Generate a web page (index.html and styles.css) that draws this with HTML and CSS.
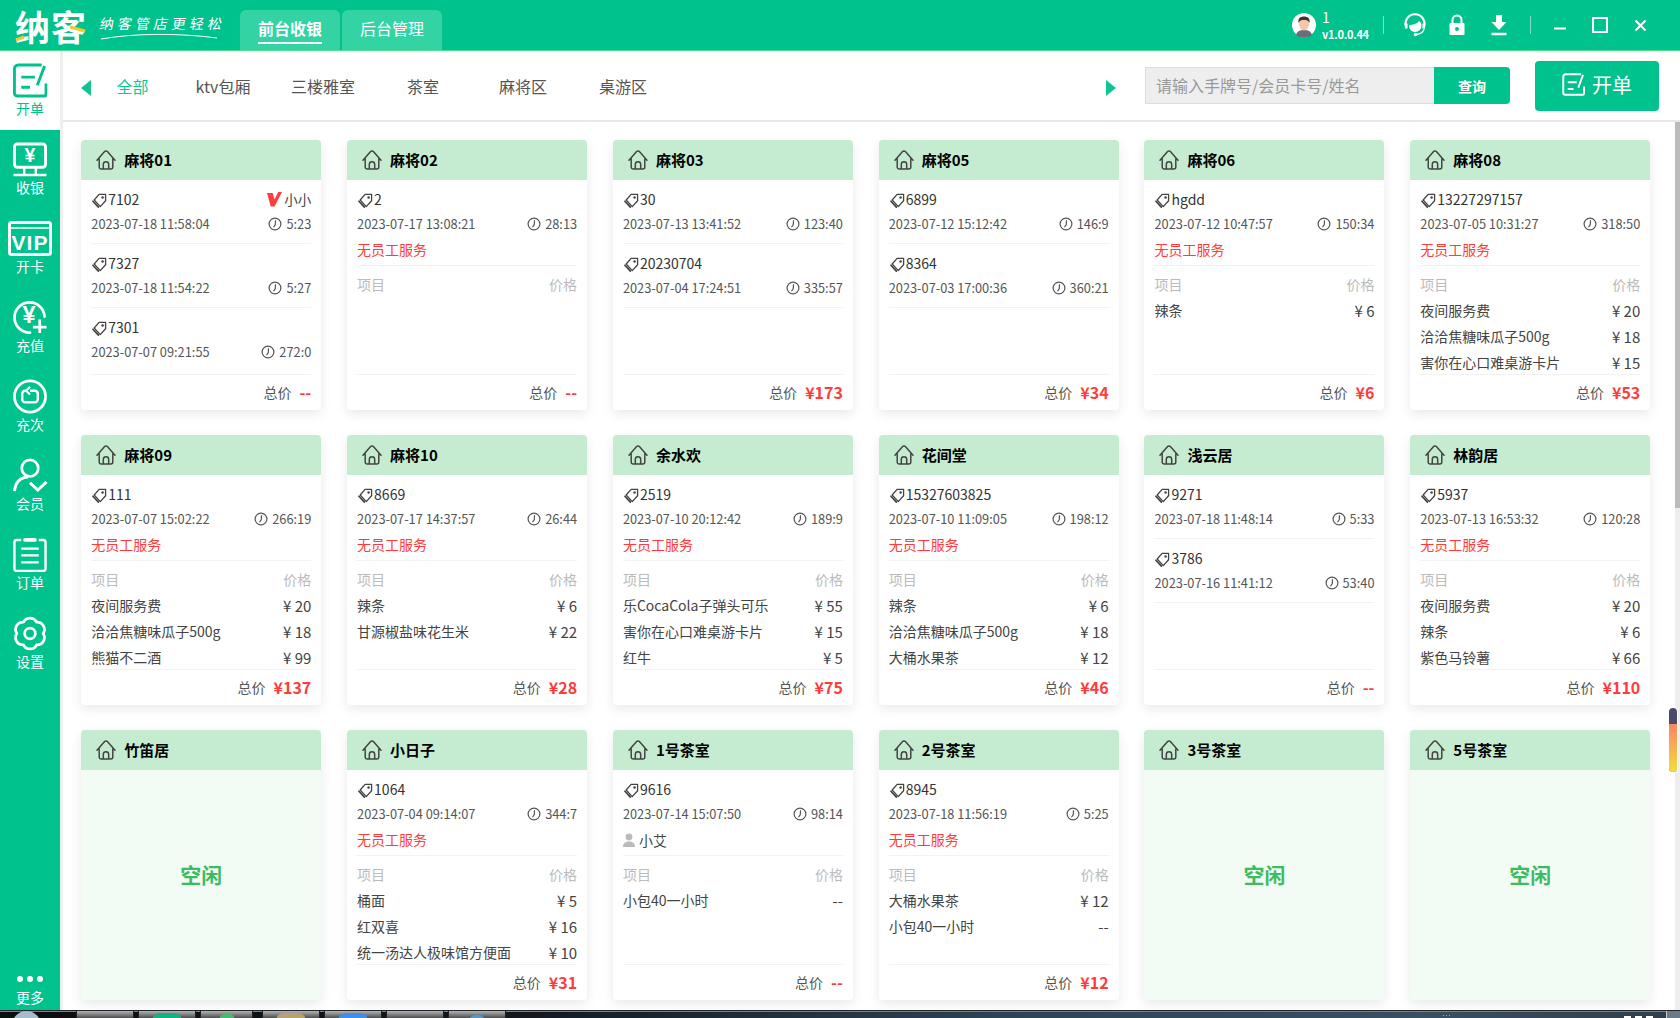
FILE: index.html
```html
<!DOCTYPE html>
<html lang="zh-CN">
<head>
<meta charset="utf-8">
<title>纳客</title>
<link rel="stylesheet" href="styles.css">
</head>
<body>
<svg class="defs" width="0" height="0">
  <symbol id="i-house" viewBox="0 0 20 20"><path d="M1 10.2 8.6 1.6a1.9 1.9 0 0 1 2.8 0L19 10.2M3.2 8.6V17a2 2 0 0 0 2 2h9.600a2 2 0 0 0 2-2V8.600M7.300 19v-4.500a2.700 2.700 0 0 1 5.400 0V19" fill="none" stroke="#444" stroke-width="1.500" stroke-linecap="round" stroke-linejoin="round"/></symbol>
  <symbol id="i-tag" viewBox="0 0 16 16"><path d="M7.600 1.500H14.500V8.300L8.800 14.500 2.300 7.500Z" fill="none" stroke="#444" stroke-width="1.400" stroke-linejoin="round"/><path d="M1 8.800 6.800 15" fill="none" stroke="#444" stroke-width="1.800" stroke-linecap="round"/><circle cx="11.300" cy="4.800" r="1.300" fill="#444"/></symbol>
  <symbol id="i-clock" viewBox="0 0 14 14"><circle cx="7" cy="7" r="5.900" fill="none" stroke="#555" stroke-width="1.200"/><path d="M7.500 3.300 7.300 7.500 5.500 10.300" fill="none" stroke="#555" stroke-width="1.200"/></symbol>
  <symbol id="i-person" viewBox="0 0 12 14"><circle cx="6" cy="4" r="3.400" fill="#bbb"/><path d="M0 14c0-4 2.500-5.500 6-5.500S12 10 12 14Z" fill="#bbb"/></symbol>
  <symbol id="i-bill" viewBox="0 0 36 36"><path d="M30 2H6a4 4 0 0 0-4 4v25a3 3 0 0 0 3 3h27a2.500 2.500 0 0 0 2.500-2.500V21M9 14.500h14M9 25h9M33 3 25.500 23" fill="none" stroke="currentColor" stroke-width="3"/></symbol>
</svg>
<div class="window">
  <header class="topbar">
    <div class="logo">
      <span class="logo-mark">纳客</span>
      <svg class="logo-swash" width="72" height="30" viewBox="0 0 72 30"><path d="M1 27 9 24M55 14 70 18" fill="none" stroke="#f5c630" stroke-width="3"/></svg>
      <div class="logo-tag">
        <span class="logo-slogan">纳客管店更轻松</span>
        <svg class="logo-curve" width="118" height="8" viewBox="0 0 118 8"><path d="M1 7C35 1 80 1 117 6" fill="none" stroke="#fff" stroke-width="1"/></svg>
      </div>
    </div>
    <nav class="modes">
      <a class="mode mode-on"><span>前台收银</span></a>
      <a class="mode"><span>后台管理</span></a>
    </nav>
    <div class="tools">
      <svg class="avatar" width="24" height="24" viewBox="0 0 24 24"><circle cx="12" cy="12" r="12" fill="#fff"/><path d="M4 22c1-4 4-5 8-5s7 1 8 5a12 12 0 0 1-16 0Z" fill="#6b6f78"/><ellipse cx="12" cy="11" rx="5" ry="6.500" fill="#f5c7a5"/><path d="M6.500 10C5.500 4 10 3.500 12 3.500s6.500.5 5.500 6.500c-1-2.500-3-3-5.500-3s-4.500.5-5.500 3Z" fill="#3a3633"/></svg>
      <div class="user"><div class="user-id">1</div><div class="user-ver">v1.0.0.44</div></div>
      <i class="vline"></i>
      <a class="tool"><svg width="22" height="24" viewBox="0 0 22 24"><path d="M2.500 15A9.500 9.500 0 1 1 19.500 15" fill="none" stroke="#fff" stroke-width="2.200"/><path d="M1 10.500v5h2.500v-5ZM18.500 10.500v5H21v-5Z" fill="#fff"/><path d="M5 12c3.500 0 8-1 10-4 2 1 2.500 3 2.500 5 0 3-3 6-6.500 6S5 16 5 12Z" fill="#fff"/><path d="M20 16c-.5 3-3.500 5-8 5.500" fill="none" stroke="#fff" stroke-width="1.500"/><circle cx="11.500" cy="21.500" r="1.700" fill="#fff"/></svg></a>
      <a class="tool"><svg width="16" height="22" viewBox="0 0 16 22"><path d="M3.500 9V6a4.500 4.500 0 0 1 9 0v3" fill="none" stroke="#fff" stroke-width="2"/><path d="M1.500 9h13a1 1 0 0 1 1 1v10a1 1 0 0 1-1 1h-13a1 1 0 0 1-1-1V10a1 1 0 0 1 1-1Z" fill="#fff"/><circle cx="8" cy="15" r="2" fill="#00c28c"/></svg></a>
      <a class="tool"><svg width="16" height="21" viewBox="0 0 16 21"><path d="M5 0h6v7h4.500L8 15 .5 7H5Z" fill="#fff"/><path d="M.5 19h15" stroke="#fff" stroke-width="2.500"/></svg></a>
      <i class="vline vline-r"></i>
      <a class="win"><svg width="13" height="13" viewBox="0 0 13 13"><path d="M0 9.500h12" stroke="#fff" stroke-width="2"/></svg></a>
      <a class="win"><svg width="16" height="16" viewBox="0 0 16 16"><rect x="1" y="1" width="14" height="14" fill="none" stroke="#fff" stroke-width="2"/></svg></a>
      <a class="win"><svg width="13" height="13" viewBox="0 0 13 13"><path d="M1.500 1.500 11.500 11.500M11.500 1.500 1.500 11.500" stroke="#fff" stroke-width="2"/></svg></a>
    </div>
  </header>
  <div class="main">
    <aside class="side">
      <a class="nav nav-on"><svg class="nav-i" width="36" height="35" viewBox="0 0 36 36"><use href="#i-bill"/></svg><span>开单</span></a>
      <a class="nav"><svg class="nav-i" width="36" height="35" viewBox="0 0 36 36"><rect x="2" y="2" width="32" height="24" rx="3" fill="none" stroke="#fff" stroke-width="3"/><text class="nav-yen" x="18" y="21" text-anchor="middle">¥</text><path d="M12 26v7M24 26v7M1 34h34" stroke="#fff" stroke-width="2.500" fill="none"/></svg><span>收银</span></a>
      <a class="nav"><svg class="nav-i" width="44" height="35" viewBox="0 0 44 35"><rect x="1.500" y="1.500" width="41" height="32" rx="2" fill="none" stroke="#fff" stroke-width="3"/><path d="M1.500 7h41" stroke="#fff" stroke-width="1.500"/><text class="nav-vip" x="22" y="29" text-anchor="middle">VIP</text></svg><span>开卡</span></a>
      <a class="nav"><svg class="nav-i" width="36" height="35" viewBox="0 0 36 36"><path d="M33 17A15.500 15.500 0 1 0 18 33.500" fill="none" stroke="#fff" stroke-width="2.800" stroke-linecap="round"/><text class="nav-yen nav-yen-l" x="17" y="24" text-anchor="middle">¥</text><path d="M28 20v14M21 28h14" stroke="#fff" stroke-width="2.800"/></svg><span>充值</span></a>
      <a class="nav"><svg class="nav-i" width="36" height="35" viewBox="0 0 36 36"><circle cx="18" cy="18" r="16" fill="none" stroke="#fff" stroke-width="2.800"/><path d="M14 12h-1a3 3 0 0 0-3 3v6a3 3 0 0 0 3 3h10a3 3 0 0 0 3-3v-6a3 3 0 0 0-3-3h-5" fill="none" stroke="#fff" stroke-width="2.500"/><path d="M18 8l-4 4 4 4" fill="none" stroke="#fff" stroke-width="2.200"/></svg><span>充次</span></a>
      <a class="nav"><svg class="nav-i" width="36" height="35" viewBox="0 0 36 36"><circle cx="18" cy="10.500" r="8.500" fill="none" stroke="#fff" stroke-width="2.800"/><path d="M2 34C3 25 8 20 16 19.500" fill="none" stroke="#fff" stroke-width="3"/><path d="M18 25.500 26 33 35 24.500" fill="none" stroke="#fff" stroke-width="3"/></svg><span>会员</span></a>
      <a class="nav"><svg class="nav-i" width="36" height="35" viewBox="0 0 36 36"><path d="M9 3H4.500A2.500 2.500 0 0 0 2 5.500v27A2.500 2.500 0 0 0 4.500 35h27a2.500 2.500 0 0 0 2.500-2.500v-27A2.500 2.500 0 0 0 31.500 3H27" fill="none" stroke="#fff" stroke-width="2.500"/><path d="M13 3h10" stroke="#fff" stroke-width="4" stroke-linecap="round"/><path d="M9 12h18M9 19h18M9 26h18" stroke="#fff" stroke-width="2.300"/></svg><span>订单</span></a>
      <a class="nav"><svg class="nav-i" width="36" height="35" viewBox="0 0 36 36"><path d="M11.250 6.310A7.500 7.500 0 0 1 24.750 6.310 7.500 7.500 0 0 1 31.500 18 7.500 7.500 0 0 1 24.750 29.690 7.500 7.500 0 0 1 11.250 29.690 7.500 7.500 0 0 1 4.500 18 7.500 7.500 0 0 1 11.250 6.310Z" fill="none" stroke="#fff" stroke-width="2.800" stroke-linejoin="round"/><circle cx="18" cy="18" r="5.500" fill="none" stroke="#fff" stroke-width="2.800"/></svg><span>设置</span></a>
      <a class="nav-more"><span class="dots"><i></i><i></i><i></i></span><span>更多</span></a>
    </aside>
    <section class="content">
      <div class="tabbar">
        <svg class="arrow" width="10" height="16" viewBox="0 0 10 16"><path d="M10 0 0 8l10 8Z" fill="#11c495"/></svg>
        <a class="tab tab-first tab-on">全部</a>
        <a class="tab">ktv包厢</a>
        <a class="tab">三楼雅室</a>
        <a class="tab">茶室</a>
        <a class="tab">麻将区</a>
        <a class="tab">桌游区</a>
        <svg class="arrow arrow-r" width="10" height="16" viewBox="0 0 10 16"><path d="M0 0l10 8-10 8Z" fill="#11c495"/></svg>
        <div class="search"><span class="search-input">请输入手牌号/会员卡号/姓名</span><button class="search-btn">查询</button></div>
        <button class="open-btn"><svg width="23" height="23" viewBox="0 0 36 36"><use href="#i-bill"/></svg><span class="open-text">开单</span></button>
      </div>
      <div class="pane">
        <div class="cards">

          <article class="card">
            <h3 class="head"><svg class="ic-house"><use href="#i-house"/></svg>麻将01</h3>
            <div class="body">
              <div class="sess">
                <div class="l-tag"><svg class="ic-tag"><use href="#i-tag"/></svg>7102<span class="vip"><svg width="15" height="15" viewBox="0 0 16 16"><path d="M0 1h6l2 7 4-8h4L8 15.500H4Z" fill="#ff3b3b"/></svg>小小</span></div>
                <div class="l-date"><span>2023-07-18 11:58:04</span><span class="dur"><svg class="ic-clock"><use href="#i-clock"/></svg>5:23</span></div>
              </div>
              <div class="sess">
                <div class="l-tag"><svg class="ic-tag"><use href="#i-tag"/></svg>7327</div>
                <div class="l-date"><span>2023-07-18 11:54:22</span><span class="dur"><svg class="ic-clock"><use href="#i-clock"/></svg>5:27</span></div>
              </div>
              <div class="sess sess-last">
                <div class="l-tag"><svg class="ic-tag"><use href="#i-tag"/></svg>7301</div>
                <div class="l-date"><span>2023-07-07 09:21:55</span><span class="dur"><svg class="ic-clock"><use href="#i-clock"/></svg>272:0</span></div>
              </div>
            </div>
            <div class="foot">总价<b>--</b></div>
          </article>

          <article class="card">
            <h3 class="head"><svg class="ic-house"><use href="#i-house"/></svg>麻将02</h3>
            <div class="body">
              <div class="sess sess-staff">
                <div class="l-tag"><svg class="ic-tag"><use href="#i-tag"/></svg>2</div>
                <div class="l-date"><span>2023-07-17 13:08:21</span><span class="dur"><svg class="ic-clock"><use href="#i-clock"/></svg>28:13</span></div>
                <div class="l-staff">无员工服务</div>
              </div>
              <div class="items"><div class="it it-h"><span>项目</span><span>价格</span></div></div>
            </div>
            <div class="foot">总价<b>--</b></div>
          </article>

          <article class="card">
            <h3 class="head"><svg class="ic-house"><use href="#i-house"/></svg>麻将03</h3>
            <div class="body">
              <div class="sess">
                <div class="l-tag"><svg class="ic-tag"><use href="#i-tag"/></svg>30</div>
                <div class="l-date"><span>2023-07-13 13:41:52</span><span class="dur"><svg class="ic-clock"><use href="#i-clock"/></svg>123:40</span></div>
              </div>
              <div class="sess">
                <div class="l-tag"><svg class="ic-tag"><use href="#i-tag"/></svg>20230704</div>
                <div class="l-date"><span>2023-07-04 17:24:51</span><span class="dur"><svg class="ic-clock"><use href="#i-clock"/></svg>335:57</span></div>
              </div>
            </div>
            <div class="foot">总价<b>¥173</b></div>
          </article>

          <article class="card">
            <h3 class="head"><svg class="ic-house"><use href="#i-house"/></svg>麻将05</h3>
            <div class="body">
              <div class="sess">
                <div class="l-tag"><svg class="ic-tag"><use href="#i-tag"/></svg>6899</div>
                <div class="l-date"><span>2023-07-12 15:12:42</span><span class="dur"><svg class="ic-clock"><use href="#i-clock"/></svg>146:9</span></div>
              </div>
              <div class="sess">
                <div class="l-tag"><svg class="ic-tag"><use href="#i-tag"/></svg>8364</div>
                <div class="l-date"><span>2023-07-03 17:00:36</span><span class="dur"><svg class="ic-clock"><use href="#i-clock"/></svg>360:21</span></div>
              </div>
            </div>
            <div class="foot">总价<b>¥34</b></div>
          </article>

          <article class="card">
            <h3 class="head"><svg class="ic-house"><use href="#i-house"/></svg>麻将06</h3>
            <div class="body">
              <div class="sess sess-staff">
                <div class="l-tag"><svg class="ic-tag"><use href="#i-tag"/></svg>hgdd</div>
                <div class="l-date"><span>2023-07-12 10:47:57</span><span class="dur"><svg class="ic-clock"><use href="#i-clock"/></svg>150:34</span></div>
                <div class="l-staff">无员工服务</div>
              </div>
              <div class="items">
                <div class="it it-h"><span>项目</span><span>价格</span></div>
                <div class="it"><span>辣条</span><span class="pr">¥ 6</span></div>
              </div>
            </div>
            <div class="foot">总价<b>¥6</b></div>
          </article>

          <article class="card">
            <h3 class="head"><svg class="ic-house"><use href="#i-house"/></svg>麻将08</h3>
            <div class="body">
              <div class="sess sess-staff">
                <div class="l-tag"><svg class="ic-tag"><use href="#i-tag"/></svg>13227297157</div>
                <div class="l-date"><span>2023-07-05 10:31:27</span><span class="dur"><svg class="ic-clock"><use href="#i-clock"/></svg>318:50</span></div>
                <div class="l-staff">无员工服务</div>
              </div>
              <div class="items">
                <div class="it it-h"><span>项目</span><span>价格</span></div>
                <div class="it"><span>夜间服务费</span><span class="pr">¥ 20</span></div>
                <div class="it"><span>洽洽焦糖味瓜子500g</span><span class="pr">¥ 18</span></div>
                <div class="it"><span>害你在心口难桌游卡片</span><span class="pr">¥ 15</span></div>
              </div>
            </div>
            <div class="foot">总价<b>¥53</b></div>
          </article>

          <article class="card">
            <h3 class="head"><svg class="ic-house"><use href="#i-house"/></svg>麻将09</h3>
            <div class="body">
              <div class="sess sess-staff">
                <div class="l-tag"><svg class="ic-tag"><use href="#i-tag"/></svg>111</div>
                <div class="l-date"><span>2023-07-07 15:02:22</span><span class="dur"><svg class="ic-clock"><use href="#i-clock"/></svg>266:19</span></div>
                <div class="l-staff">无员工服务</div>
              </div>
              <div class="items">
                <div class="it it-h"><span>项目</span><span>价格</span></div>
                <div class="it"><span>夜间服务费</span><span class="pr">¥ 20</span></div>
                <div class="it"><span>洽洽焦糖味瓜子500g</span><span class="pr">¥ 18</span></div>
                <div class="it"><span>熊猫不二酒</span><span class="pr">¥ 99</span></div>
              </div>
            </div>
            <div class="foot">总价<b>¥137</b></div>
          </article>

          <article class="card">
            <h3 class="head"><svg class="ic-house"><use href="#i-house"/></svg>麻将10</h3>
            <div class="body">
              <div class="sess sess-staff">
                <div class="l-tag"><svg class="ic-tag"><use href="#i-tag"/></svg>8669</div>
                <div class="l-date"><span>2023-07-17 14:37:57</span><span class="dur"><svg class="ic-clock"><use href="#i-clock"/></svg>26:44</span></div>
                <div class="l-staff">无员工服务</div>
              </div>
              <div class="items">
                <div class="it it-h"><span>项目</span><span>价格</span></div>
                <div class="it"><span>辣条</span><span class="pr">¥ 6</span></div>
                <div class="it"><span>甘源椒盐味花生米</span><span class="pr">¥ 22</span></div>
              </div>
            </div>
            <div class="foot">总价<b>¥28</b></div>
          </article>

          <article class="card">
            <h3 class="head"><svg class="ic-house"><use href="#i-house"/></svg>余水欢</h3>
            <div class="body">
              <div class="sess sess-staff">
                <div class="l-tag"><svg class="ic-tag"><use href="#i-tag"/></svg>2519</div>
                <div class="l-date"><span>2023-07-10 20:12:42</span><span class="dur"><svg class="ic-clock"><use href="#i-clock"/></svg>189:9</span></div>
                <div class="l-staff">无员工服务</div>
              </div>
              <div class="items">
                <div class="it it-h"><span>项目</span><span>价格</span></div>
                <div class="it"><span>乐CocaCola子弹头可乐</span><span class="pr">¥ 55</span></div>
                <div class="it"><span>害你在心口难桌游卡片</span><span class="pr">¥ 15</span></div>
                <div class="it"><span>红牛</span><span class="pr">¥ 5</span></div>
              </div>
            </div>
            <div class="foot">总价<b>¥75</b></div>
          </article>

          <article class="card">
            <h3 class="head"><svg class="ic-house"><use href="#i-house"/></svg>花间堂</h3>
            <div class="body">
              <div class="sess sess-staff">
                <div class="l-tag"><svg class="ic-tag"><use href="#i-tag"/></svg>15327603825</div>
                <div class="l-date"><span>2023-07-10 11:09:05</span><span class="dur"><svg class="ic-clock"><use href="#i-clock"/></svg>198:12</span></div>
                <div class="l-staff">无员工服务</div>
              </div>
              <div class="items">
                <div class="it it-h"><span>项目</span><span>价格</span></div>
                <div class="it"><span>辣条</span><span class="pr">¥ 6</span></div>
                <div class="it"><span>洽洽焦糖味瓜子500g</span><span class="pr">¥ 18</span></div>
                <div class="it"><span>大桶水果茶</span><span class="pr">¥ 12</span></div>
              </div>
            </div>
            <div class="foot">总价<b>¥46</b></div>
          </article>

          <article class="card">
            <h3 class="head"><svg class="ic-house"><use href="#i-house"/></svg>浅云居</h3>
            <div class="body">
              <div class="sess">
                <div class="l-tag"><svg class="ic-tag"><use href="#i-tag"/></svg>9271</div>
                <div class="l-date"><span>2023-07-18 11:48:14</span><span class="dur"><svg class="ic-clock"><use href="#i-clock"/></svg>5:33</span></div>
              </div>
              <div class="sess">
                <div class="l-tag"><svg class="ic-tag"><use href="#i-tag"/></svg>3786</div>
                <div class="l-date"><span>2023-07-16 11:41:12</span><span class="dur"><svg class="ic-clock"><use href="#i-clock"/></svg>53:40</span></div>
              </div>
            </div>
            <div class="foot">总价<b>--</b></div>
          </article>

          <article class="card">
            <h3 class="head"><svg class="ic-house"><use href="#i-house"/></svg>林韵居</h3>
            <div class="body">
              <div class="sess sess-staff">
                <div class="l-tag"><svg class="ic-tag"><use href="#i-tag"/></svg>5937</div>
                <div class="l-date"><span>2023-07-13 16:53:32</span><span class="dur"><svg class="ic-clock"><use href="#i-clock"/></svg>120:28</span></div>
                <div class="l-staff">无员工服务</div>
              </div>
              <div class="items">
                <div class="it it-h"><span>项目</span><span>价格</span></div>
                <div class="it"><span>夜间服务费</span><span class="pr">¥ 20</span></div>
                <div class="it"><span>辣条</span><span class="pr">¥ 6</span></div>
                <div class="it"><span>紫色马铃薯</span><span class="pr">¥ 66</span></div>
              </div>
            </div>
            <div class="foot">总价<b>¥110</b></div>
          </article>

          <article class="card card-free">
            <h3 class="head"><svg class="ic-house"><use href="#i-house"/></svg>竹笛居</h3>
            <div class="free">空闲</div>
          </article>

          <article class="card">
            <h3 class="head"><svg class="ic-house"><use href="#i-house"/></svg>小日子</h3>
            <div class="body">
              <div class="sess sess-staff">
                <div class="l-tag"><svg class="ic-tag"><use href="#i-tag"/></svg>1064</div>
                <div class="l-date"><span>2023-07-04 09:14:07</span><span class="dur"><svg class="ic-clock"><use href="#i-clock"/></svg>344:7</span></div>
                <div class="l-staff">无员工服务</div>
              </div>
              <div class="items">
                <div class="it it-h"><span>项目</span><span>价格</span></div>
                <div class="it"><span>桶面</span><span class="pr">¥ 5</span></div>
                <div class="it"><span>红双喜</span><span class="pr">¥ 16</span></div>
                <div class="it"><span>统一汤达人极味馆方便面</span><span class="pr">¥ 10</span></div>
              </div>
            </div>
            <div class="foot">总价<b>¥31</b></div>
          </article>

          <article class="card">
            <h3 class="head"><svg class="ic-house"><use href="#i-house"/></svg>1号茶室</h3>
            <div class="body">
              <div class="sess sess-staff">
                <div class="l-tag"><svg class="ic-tag"><use href="#i-tag"/></svg>9616</div>
                <div class="l-date"><span>2023-07-14 15:07:50</span><span class="dur"><svg class="ic-clock"><use href="#i-clock"/></svg>98:14</span></div>
                <div class="l-staff l-person"><svg class="ic-person"><use href="#i-person"/></svg>小艾</div>
              </div>
              <div class="items">
                <div class="it it-h"><span>项目</span><span>价格</span></div>
                <div class="it"><span>小包40一小时</span><span class="pr">--</span></div>
              </div>
            </div>
            <div class="foot">总价<b>--</b></div>
          </article>

          <article class="card">
            <h3 class="head"><svg class="ic-house"><use href="#i-house"/></svg>2号茶室</h3>
            <div class="body">
              <div class="sess sess-staff">
                <div class="l-tag"><svg class="ic-tag"><use href="#i-tag"/></svg>8945</div>
                <div class="l-date"><span>2023-07-18 11:56:19</span><span class="dur"><svg class="ic-clock"><use href="#i-clock"/></svg>5:25</span></div>
                <div class="l-staff">无员工服务</div>
              </div>
              <div class="items">
                <div class="it it-h"><span>项目</span><span>价格</span></div>
                <div class="it"><span>大桶水果茶</span><span class="pr">¥ 12</span></div>
                <div class="it"><span>小包40一小时</span><span class="pr">--</span></div>
              </div>
            </div>
            <div class="foot">总价<b>¥12</b></div>
          </article>

          <article class="card card-free">
            <h3 class="head"><svg class="ic-house"><use href="#i-house"/></svg>3号茶室</h3>
            <div class="free">空闲</div>
          </article>

          <article class="card card-free">
            <h3 class="head"><svg class="ic-house"><use href="#i-house"/></svg>5号茶室</h3>
            <div class="free">空闲</div>
          </article>

        </div>
        <div class="scroll"><div class="scroll-thumb"></div></div>
        <div class="indicator"><i></i></div>
      </div>
    </section>
  </div>
</div>
<footer class="taskbar">
  <span class="orb"></span>
  <span class="tb"></span>
  <span class="tb"><i class="tb-i tb-green"></i></span>
  <span class="tb tb-n"><i class="tb-i tb-lime"></i></span>
  <span class="tb"><i class="tb-i tb-tan"></i></span>
  <span class="tb"><i class="tb-i tb-blue"></i></span>
  <span class="tb"></span>
  <span class="tb"><i class="tb-i tb-sky"></i></span>
  <span class="tb-dots"><i></i><i></i><i></i></span>
  <span class="tb-clock"><i></i><i></i><i></i></span>
  <span class="tb-desk"></span>
</footer>
</body>
</html>
```
FILE: styles.css
```css
* { box-sizing: border-box; }
html, body { margin: 0; height: 100%; }
body {
  width: 1680px;
  height: 1018px;
  overflow: hidden;
  display: flex;
  flex-direction: column;
  font-family: "Noto Sans CJK SC", "Noto Sans", sans-serif;
  color: #444;
  background: #fff;
}
a { text-decoration: none; color: inherit; }
.defs { position: absolute; }
.window { height: 1010px; display: flex; flex-direction: column; }

/* top bar */
.topbar {
  height: 51px;
  flex: none;
  display: flex;
  background: #00c28c;
  border-bottom: 1px solid #4ede8f;
  color: #fff;
}
.logo { position: relative; width: 240px; display: flex; align-items: center; padding-left: 15px; flex: none; }
.logo-mark { width: 85px; font-size: 35px; line-height: 40px; font-weight: 700; letter-spacing: 1px; margin-top: 2px; white-space: nowrap; }
.logo-swash { position: absolute; left: 15px; top: 13px; }
.logo-tag { display: flex; flex-direction: column; }
.logo-slogan { font-size: 14px; line-height: 20px; letter-spacing: 4px; transform: skewX(-10deg); white-space: nowrap; margin-top: 2px; }
.logo-curve { margin-top: -1px; }
.modes { display: flex; gap: 2px; align-self: flex-end; }
.mode {
  width: 100px;
  height: 40px;
  background: #33d3a3;
  border-radius: 6px 6px 0 0;
  display: flex;
  justify-content: center;
  align-items: center;
  font-size: 16px;
}
.mode span { display: block; line-height: 24px; border-bottom: 2px solid transparent; height: 28px; }
.mode-on span { font-weight: 700; border-bottom-color: #fff; }
.tools { margin-left: auto; display: flex; align-items: center; padding-right: 20px; }
.avatar { flex: none; margin-right: 6px; }
.user { width: 41px; margin-right: 20px; }
.user-id { font-size: 14px; line-height: 18px; }
.user-ver { font-size: 11px; line-height: 16px; font-weight: 700; letter-spacing: -.3px; white-space: nowrap; }
.vline { width: 1px; height: 18px; background: rgba(255, 255, 255, .5); margin-right: 10px; }
.vline-r { margin-right: 9px; margin-left: 10px; }
.tool { width: 42px; display: flex; justify-content: center; align-items: center; height: 50px; }
.win { width: 40px; display: flex; justify-content: center; align-items: center; height: 50px; }

/* body layout */
.main { flex: 1; display: flex; min-height: 0; }
.side {
  width: 63px;
  flex: none;
  background: #00c28c;
  border-right: 3px solid #eee;
  display: flex;
  flex-direction: column;
  color: #fff;
}
.nav {
  height: 79px;
  flex: none;
  padding-top: 12px;
  display: flex;
  flex-direction: column;
  align-items: center;
  font-size: 14px;
}
.nav span { line-height: 19px; margin-top: 1px; }
.nav-i { flex: none; }
.nav-on { background: #fff; color: #00c28c; }
.nav-yen { font-size: 20px; font-weight: 700; fill: #fff; font-family: "Liberation Sans", sans-serif; }
.nav-yen-l { font-size: 24px; }
.nav-vip { font-size: 21px; font-weight: 700; fill: #fff; font-family: "Liberation Sans", sans-serif; letter-spacing: 1px; }
.nav-more { margin-top: auto; display: flex; flex-direction: column; align-items: center; font-size: 14px; line-height: 20px; padding-bottom: 3px; }
.dots { display: flex; gap: 4px; margin-bottom: 5px; }
.dots i { width: 6px; height: 6px; background: #fff; border-radius: 50%; }

.content { flex: 1; min-width: 0; display: flex; flex-direction: column; }
.tabbar {
  height: 71px;
  flex: none;
  border-bottom: 2px solid #e8e8e8;
  padding: 0 21px 0 18px;
  display: flex;
  align-items: center;
}
.arrow { flex: none; margin-top: 4px; margin-right: 1px; }
.arrow-r { margin-left: auto; margin-right: 0; }
.tab {
  width: 100px;
  flex: none;
  text-align: center;
  font-size: 16px;
  line-height: 24px;
  color: #555;
  margin-top: 1px;
}
.tab-first { width: 81px; }
.tab-on { color: #11c495; }
.search { display: flex; height: 37px; margin-left: 29px; }
.search-input {
  width: 289px;
  background: #eee;
  border: 1px solid #ddd;
  border-right: 0;
  padding-left: 10px;
  font-size: 16px;
  line-height: 35px;
  color: #999;
}
.search-btn {
  width: 76px;
  border: 0;
  padding: 0;
  border-radius: 0 4px 4px 0;
  background: #00c28c;
  color: #fff;
  font: 700 14px "Noto Sans CJK SC", sans-serif;
}
.open-btn {
  width: 124px;
  height: 50px;
  margin-left: 25px;
  border: 0;
  padding: 0 0 2px;
  border-radius: 4px;
  background: #00c28c;
  color: #fff;
  display: flex;
  justify-content: center;
  align-items: center;
  gap: 7px;
  font: 20px "Noto Sans CJK SC", sans-serif;
}

/* card area */
.pane { flex: 1; min-height: 0; position: relative; display: flex; }
.cards {
  flex: 1;
  padding: 18px 0 0 18.3px;
  display: grid;
  grid-template-columns: repeat(6, 240px);
  grid-auto-rows: 270px;
  column-gap: 25.8px;
  row-gap: 25px;
  align-content: start;
}
.card {
  display: flex;
  flex-direction: column;
  background: #fff;
  border-radius: 4px;
  box-shadow: 0 4px 12px rgba(0, 0, 0, .09);
  overflow: hidden;
  min-height: 0;
}
.head {
  margin: 0;
  height: 40px;
  flex: none;
  background: #c5ecd0;
  display: flex;
  align-items: center;
  padding: 0 0 2px 15px;
  font-size: 15px;
  font-weight: 700;
  color: #000;
}
.ic-house { width: 20px; height: 20px; margin: 2px 8px 0 0; flex: none; }
.body { height: 194px; flex: none; padding: 0 10px; overflow: hidden; }
.sess { padding-top: 8px; padding-bottom: 8px; border-bottom: 1px solid #f2f2f2; }
.sess-last { border-bottom: 0; }
.sess-staff { padding-bottom: 0; }
.l-tag { height: 24px; display: flex; align-items: center; font-size: 14px; line-height: 22px; color: #333; padding-bottom: 2px; }
.ic-tag { width: 15px; height: 15px; margin: 2px 1px 0 1px; flex: none; }
.vip { margin-left: auto; display: flex; align-items: center; gap: 2px; font-size: 13.500px; color: #444; }
.l-date { height: 23px; display: flex; justify-content: space-between; align-items: center; font-size: 12.800px; color: #555; white-space: nowrap; padding-bottom: 1px; }
.dur { display: flex; align-items: center; gap: 4px; }
.ic-clock { width: 14px; height: 14px; flex: none; margin-top: 1px; }
.l-staff { height: 30px; font-size: 14px; line-height: 28px; color: #ff3b3b; }
.l-person { color: #444; display: flex; align-items: center; gap: 4px; }
.ic-person { width: 12px; height: 14px; flex: none; }
.items { padding-top: 8px; display: flex; flex-direction: column; gap: 4px; }
.it { height: 22px; display: flex; justify-content: space-between; align-items: center; font-size: 14px; color: #444; white-space: nowrap; padding-bottom: 2px; }
.it-h { color: #bbb; }
.pr { font-size: 15px; }
.foot {
  height: 36px;
  flex: none;
  margin: 0 10px;
  border-top: 1px solid #f2f2f2;
  display: flex;
  justify-content: flex-end;
  align-items: center;
  font-size: 14px;
  color: #555;
  padding-bottom: 2px;
}
.foot b { font-size: 16px; color: #ff3b3b; margin-left: 8px; }
.card-free { background: #f2fbf4; }
.free {
  flex: 1;
  display: flex;
  justify-content: center;
  align-items: center;
  padding-bottom: 22px;
  font-size: 21px;
  font-weight: 700;
  color: #3dbb62;
}

/* scrollbar */
.scroll { width: 5px; flex: none; background: #eee; }
.scroll-thumb { height: 386px; background: #bbb; }
.indicator {
  position: absolute;
  right: 3px;
  top: 586px;
  width: 8px;
  height: 64px;
  border-radius: 4px;
  background: #4a4a6a;
  box-shadow: 0 0 0 1px #fff;
  overflow: hidden;
}
.indicator i {
  position: absolute;
  left: 0;
  right: 0;
  top: 16px;
  bottom: 0;
  background: linear-gradient(#fb8560, #f4dd3c);
}

/* OS task bar */
.taskbar {
  height: 8px;
  flex: none;
  display: flex;
  overflow: hidden;
  border-top: 1px solid #20262c;
  box-shadow: inset 0 1px 0 #79838c;
  background: linear-gradient(90deg, #0b0d10 0, #12171c 30%, #2e4356 60%, #3a4f60 85%, #2f3d49 100%);
}
.orb { width: 29px; height: 29px; flex: none; margin-left: 12px; margin-right: 35px; border-radius: 50%; background: #a9bccb; }
.tb {
  width: 58px;
  flex: none;
  margin-right: 4px;
  display: flex;
  justify-content: center;
  background: linear-gradient(#b5b5b5, #4c4c4c);
  border-left: 1px solid #222;
  border-right: 1px solid #222;
}
.tb-n { width: 53px; margin-right: 9px; }
.tb-i { width: 30px; height: 10px; border-radius: 8px 8px 0 0; margin-top: 2px; }
.tb-green { background: #0fb37f; }
.tb-lime { background: #3fbf6d; width: 16px; }
.tb-tan { background: #b8a070; }
.tb-blue { background: #3f8fe8; }
.tb-sky { background: #4a9ad4; width: 18px; margin-top: 4px; }
.tb-dots { margin-left: 933px; display: flex; gap: 2px; padding-top: 4px; }
.tb-dots i { width: 1px; height: 1px; background: #aaa; }
.tb-clock { margin-left: 174px; display: flex; gap: 4px; padding-top: 5px; }
.tb-clock i { width: 7px; height: 2px; background: #fff; }
.tb-desk { margin-left: auto; width: 14px; flex: none; background: #6b7a86; border-left: 1px solid #ccc; }
```
